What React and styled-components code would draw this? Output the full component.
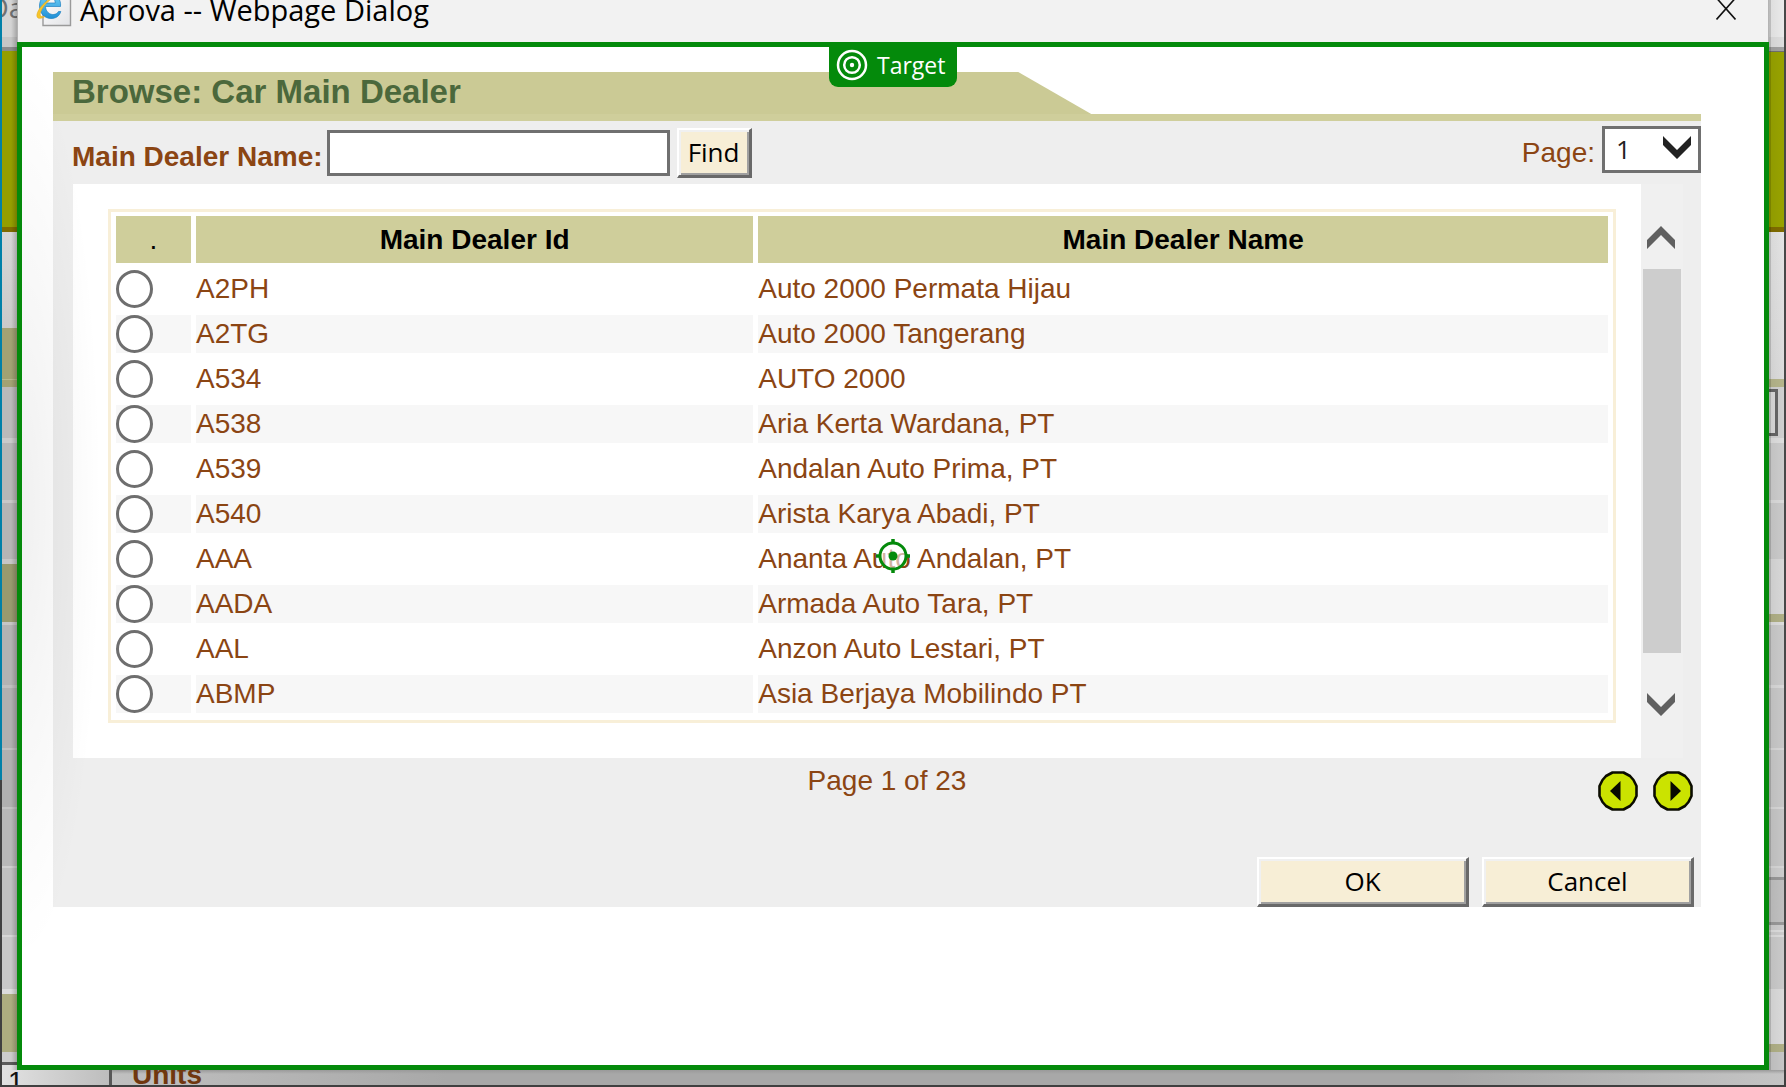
import React, { useState } from "react";
import styled, { createGlobalStyle } from "styled-components";

const arial = `"Liberation Sans", Arial, sans-serif`;
const segoe = `"Open Sans", "Noto Sans", sans-serif`;
const green = "#048a0b";
const brown = "#8b4513";

const GlobalStyle = createGlobalStyle`
  *, *::before, *::after { box-sizing: border-box; }
  body { margin: 0; background: #b4b4b4; font-family: ${arial}; }
`;

const Page = styled.div`
  display: flex;
  flex-direction: column;
  min-height: 100vh;
  overflow: hidden;
`;

const Middle = styled.div`
  display: flex;
  flex: 1;
`;

const Strip = styled.div`
  display: flex;
  flex-direction: column;
  width: 17px;
  flex: none;
  overflow: hidden;
  position: relative;
`;

const LeftStrip = styled(Strip)`
  border: solid;
  border-width: 0 0 0 2px;
  border-image: linear-gradient(#0080a8 0 780px, #404040 780px) 1;
  &::after {
    content: "";
    position: absolute;
    inset: 0;
    background: linear-gradient(to right, transparent 9px, rgba(0, 0, 0, 0.1) 12px, rgba(0, 0, 0, 0.22));
  }
`;

const RightStrip = styled(Strip)`
  border-right: 2px solid #484848;
  &::after {
    content: "";
    position: absolute;
    inset: 0;
    background: linear-gradient(to right, rgba(0, 0, 0, 0.2) 2px, rgba(0, 0, 0, 0.05) 2px, transparent);
  }
`;

const Band = styled.div`
  flex: ${(p) => (p.$h ? `0 0 ${p.$h}px` : "1")};
  background: ${(p) => p.$c};
`;

const TabBand = styled(Band)`
  overflow: hidden;
  color: #707070;
  font: 28px/14px ${segoe};
  text-indent: -15px;
  white-space: nowrap;
`;

const FieldBand = styled(Band)`
  padding: 2px 6px 2px 0;
`;

const FieldEnd = styled.div`
  height: 47px;
  border: 3px solid #666;
  border-left: 0;
  background: #dadada;
`;

const BottomStrip = styled.div`
  display: flex;
  height: 17px;
  overflow: hidden;
  border: solid #404040;
  border-width: 0 2px 2px;
`;

const NumberCell = styled.div`
  width: 110px;
  border-right: 3px solid #585858;
  background: linear-gradient(to right, #e2e2e2, #bdbdbd);
  padding-left: 6px;
  color: #111;
  font: 28px/24px ${arial};
`;

const UnitsCell = styled.div`
  flex: 1;
  padding-left: 20px;
  background: linear-gradient(#9a9a9a, transparent 4px), linear-gradient(to right, #c0c0c0, #a8a8a8 20%, #a8a8a8 80%, #c4c4c4);
  color: #70370f;
  font: bold 28px/10px ${arial};
`;

const Dialog = styled.main`
  flex: 1;
  min-width: 0;
  display: flex;
  flex-direction: column;
`;

const TitleBar = styled.header`
  display: flex;
  height: 42px;
  margin: 0 1px;
  padding: 0 32px 0 18px;
  background: #f2f2f2;
  overflow: hidden;
`;

const Title = styled.div`
  flex: 1;
  margin-left: 8px;
  color: #000;
  font: 29px/19px ${segoe};
  white-space: nowrap;
`;

const CloseButton = styled.button`
  height: 20px;
  padding: 0;
  border: 0;
  background: none;
`;

const Frame = styled.section`
  position: relative;
  flex: 1;
  padding: 25px 63px 25px 31px;
  border: 5px solid ${green};
  background: #fff;
  &::after {
    content: "";
    position: absolute;
    left: 0;
    top: 0;
    width: 80px;
    height: 920px;
    background: radial-gradient(ellipse at left, rgba(0, 0, 0, 0.06), transparent 70%);
    pointer-events: none;
  }
`;

const TargetTag = styled.div`
  position: absolute;
  top: 0;
  left: 50%;
  transform: translateX(-50%);
  display: flex;
  align-items: center;
  gap: 9px;
  width: 128px;
  height: 40px;
  padding: 0 7px 4px;
  border-radius: 0 0 9px 9px;
  background: ${green};
  color: #fff;
  font: 23px/36px ${segoe};
`;

const Crosshair = styled.svg`
  position: absolute;
  top: 50%;
  left: 50%;
  transform: translate(-50%, -50%);
  pointer-events: none;
`;

const Banner = styled.div`
  border-bottom: 7px solid #cfce9b;
`;

const Heading = styled.h1`
  width: 63%;
  height: 42px;
  margin: 0;
  padding-left: 19px;
  background: #cbca95;
  clip-path: polygon(0 0, calc(100% - 73px) 0, 100% 100%, 0 100%);
  color: #4b683c;
  font: bold 33px/39px ${arial};
`;

const Panel = styled.form`
  background: #eee;
`;

const SearchRow = styled.div`
  display: flex;
  justify-content: space-between;
  align-items: flex-start;
  height: 63px;
  padding-left: 19px;
  padding-top: 5px;
`;

const Group = styled.div`
  display: flex;
  align-items: center;
  gap: ${(p) => p.$gap}px;
  padding-top: ${(p) => p.$top || 0}px;
`;

const Label = styled.label`
  padding-top: 7px;
  color: ${brown};
  font: ${(p) => (p.$bold ? "bold" : "normal")} 28px/32px ${arial};
`;

const TextBox = styled.input`
  width: 343px;
  height: 46px;
  margin-right: 3px;
  padding: 0 6px;
  border: 3px solid #707070;
  background: #fff;
  font: 28px ${arial};
`;

const Button = styled.button`
  width: ${(p) => (p.$wide ? 212 : 75)}px;
  height: 50px;
  padding: 0 0 2px;
  border: solid;
  border-width: 2px 3px 3px 2px;
  border-color: #fff #696969 #696969 #fff;
  box-shadow: inset 2px 2px #f0f0f0, inset -2px -2px #a0a0a0;
  background: #f7eed6;
  color: #000;
  font: 26px/36px ${segoe};
`;

const SelectBox = styled.div`
  position: relative;
  svg {
    position: absolute;
    right: 10px;
    top: 10px;
    pointer-events: none;
  }
`;

const Select = styled.select`
  display: block;
  appearance: none;
  width: 99px;
  height: 47px;
  padding: 0 11px 2px;
  border: 3px solid #707070;
  border-radius: 0;
  background: #fff;
  color: #222;
  font: 26px ${segoe};
`;

const Results = styled.div`
  display: flex;
  margin-left: 20px;
  padding-right: 18px;
`;

const Sheet = styled.div`
  flex: 1;
  padding: 25px 25px 35px 35px;
  background: #fff;
`;

const TableFrame = styled.div`
  padding: 4px 0 7px;
  border: 3px solid #f8efd8;
`;

const Table = styled.table`
  width: 100%;
  table-layout: fixed;
  border-collapse: separate;
  border-spacing: 5px 0;
`;

const HeadCell = styled.th`
  width: ${(p) => p.$width || "auto"};
  height: 47px;
  padding: 0;
  background: #cfce9b;
  color: #000;
  font: ${(p) => (p.$plain ? "normal" : "bold")} 28px/38px ${arial};
`;

const Cell = styled.td`
  height: 45px;
  padding: 0;
  border-top: 7px solid #fff;
  background: ${(p) => (p.$striped ? "#f7f7f7" : "#fff")};
  color: ${brown};
  font: 28px/38px ${arial};
  white-space: nowrap;
`;

const Radio = styled.input`
  appearance: none;
  display: block;
  width: 37px;
  height: 38px;
  margin: 0;
  border: 3px solid #6e6e6e;
  border-radius: 50%;
  background: #fff;
  &:checked { box-shadow: inset 0 0 0 7px #fff; background: #333; }
`;

const ScrollBar = styled.div`
  display: flex;
  flex-direction: column;
  align-items: center;
  width: 42px;
  padding: 22px 2px;
  background: #f0f0f0;
`;

const ScrollButton = styled.button`
  width: 38px;
  height: 63px;
  padding: 0 2px 0 0;
  border: 0;
  background: none;
  svg { display: block; margin: 0 auto; }
`;

const Thumb = styled.div`
  width: 38px;
  height: 384px;
  margin-bottom: auto;
  background: #cdcdcd;
`;

const Pager = styled.div`
  display: grid;
  grid-template-columns: 1fr auto 1fr;
  align-items: start;
  height: 99px;
  padding: 4px 8px 0 28px;
`;

const PageCount = styled.div`
  grid-column: 2;
  color: ${brown};
  font: 28px/38px ${arial};
`;

const PagerButtons = styled.div`
  display: flex;
  justify-content: flex-end;
  gap: 15px;
  padding-top: 9px;
`;

const RoundButton = styled.button`
  width: 40px;
  height: 40px;
  padding: 0;
  border: 0;
  background: none;
  svg { display: block; }
`;

const Actions = styled.div`
  display: flex;
  justify-content: flex-end;
  gap: 13px;
  padding-right: 7px;
`;

const leftBands = [
  [37, "#d4d4d4", "tab"], [10, "#c6c6c6"], [4, "#8c8c8c"], [176, "#949e00"], [5, "#806c00"],
  [96, "linear-gradient(#d6d6d6, #cacaca)"], [51, "#a2a273"], [1, "#b8b88e"], [7, "#a2a273"],
  [51, "#bababa"], [5, "#cacaca"], [57, "#b7b7b7"], [3, "#c8c8c8"], [56, "#b5b5b5"], [5, "#c6c6c6"],
  [58, "#989a6e"], [3, "#c6c6c6"], [60, "#b3b3b3"], [3, "#c0c0c0"], [60, "#b0b0b0"], [2, "#c0c0c0"],
  [57, "#b0b0b0"], [2, "#c4c4c4"], [57, "#b8b8b8"], [2, "#cfcfcf"], [67, "#c0c0c0"], [2, "#d6d6d6"],
  [52, "#c8c8c8"], [5, "#dcdcdc"], [58, "#adad80"], [10, "#cccccc"], [3, "#5a5a5a"], [0, "#dedede"],
];

const rightBands = [
  [37, "#eaeaea"], [10, "#dedede"], [4, "#a2a2a2"], [1, "#707070"], [175, "#98a300"], [5, "#806c00"],
  [147, "linear-gradient(#e4e4e4, #dcdcdc)"], [8, "#b5b58b"], [51, "#d0d0d0", "field"], [5, "#dedede"],
  [57, "#cccccc"], [3, "#dadada"], [56, "#cacaca"], [55, "#d8d8d8"], [8, "#b0b086"], [3, "#dcdcdc"],
  [60, "#cacaca"], [3, "#d8d8d8"], [60, "#c8c8c8"], [2, "#d6d6d6"], [57, "#c8c8c8"], [2, "#d6d6d6"],
  [57, "#c6c6c6"], [2, "#d6d6d6"], [9, "#cccccc"], [3, "#989898"], [42, "#c0c0c0"], [3, "#989898"],
  [5, "#cccccc"], [2, "#dcdcdc"], [3, "#cccccc"], [2, "#dcdcdc"], [52, "#cacaca"], [55, "#dadada"],
  [8, "#b0b086"], [0, "#c6c6c6"],
];

const dealers = [
  ["A2PH", "Auto 2000 Permata Hijau"],
  ["A2TG", "Auto 2000 Tangerang"],
  ["A534", "AUTO 2000"],
  ["A538", "Aria Kerta Wardana, PT"],
  ["A539", "Andalan Auto Prima, PT"],
  ["A540", "Arista Karya Abadi, PT"],
  ["AAA", "Ananta Auto Andalan, PT"],
  ["AADA", "Armada Auto Tara, PT"],
  ["AAL", "Anzon Auto Lestari, PT"],
  ["ABMP", "Asia Berjaya Mobilindo PT"],
];

const renderBand = ([height, color, kind], index) => {
  if (kind === "tab") return <TabBand key={index} $h={height} $c={color}>Oa</TabBand>;
  if (kind === "field") return <FieldBand key={index} $h={height} $c={color}><FieldEnd /></FieldBand>;
  return <Band key={index} $h={height} $c={color} />;
};

const BrowserIcon = () => (
  <svg width="36" height="27" viewBox="0 0 36 27" fill="none" aria-hidden="true">
    <defs>
      <linearGradient id="sheet" x1="0" y1="0" x2="1" y2="1">
        <stop offset="0" stopColor="#fff" />
        <stop offset="1" stopColor="#e2e3e6" />
      </linearGradient>
      <linearGradient id="letter" x1="0" y1="0" x2="0" y2="1">
        <stop offset="0" stopColor="#6fd0f6" />
        <stop offset="1" stopColor="#1f8fd6" />
      </linearGradient>
    </defs>
    <path d="M7 -8H34.5V25.5H7Z" fill="url(#sheet)" stroke="#9a9a9a" strokeWidth="1.4" />
    <path d="M22.500 11.500C20.500 15 15.500 15.700 12 12.500C10 10.500 9.500 8 9.500 6.500H24.500C25.500 -1 20 -6 14 -5.500C7 -5 3.500 0 3.500 6C3.500 13 8.500 18.500 15 18.500C20 18.500 23.500 16 24.800 11.500ZM9.800 3C10.500 -1.500 13 -2.500 15 -2.500C17.500 -2.500 19.300 0 19.300 3Z" fill="url(#letter)" stroke="#1c80c2" strokeWidth="0.7" />
    <path d="M24 -6C15 -4 3 6 1 14C0 19 4 19.500 9 16.500C5 17.500 3.500 16 4.500 12.500C7 5 16 -3 24 -6Z" fill="#f7c52b" stroke="#dda51c" strokeWidth="0.5" />
  </svg>
);

const Chevron = ({ up, dark }) => (
  <svg width="28" height="23" viewBox="0 0 28 23" aria-hidden="true">
    <path
      d={up ? "M14 0L28 14V23L14 9L0 23V14Z" : "M14 23L28 9V0L14 14L0 0V9Z"}
      fill={dark ? "#222" : "#606060"}
    />
  </svg>
);

const RoundArrow = ({ next }) => (
  <svg width="40" height="40" viewBox="0 0 40 40" aria-hidden="true">
    <path
      d="M14.500 1.500H25.500L32 5L35.500 9L38.500 15V25L35.500 31L32 35L25.500 38.500H14.500L8 35L4.500 31L1.500 25V15L4.500 9L8 5Z"
      fill="#cbe300"
      stroke="#0b0c00"
      strokeWidth="2.600"
      strokeLinejoin="round"
    />
    <path d={next ? "M17.500 10L28 20L17.500 30Z" : "M22.500 10L12 20L22.500 30Z"} fill="#080900" />
  </svg>
);

export default function App() {
  const [name, setName] = useState("");
  return (
    <>
      <GlobalStyle />
      <Page>
        <Middle>
          <LeftStrip>{leftBands.map(renderBand)}</LeftStrip>
          <Dialog>
            <TitleBar>
              <BrowserIcon />
              <Title>Aprova -- Webpage Dialog</Title>
              <CloseButton type="button" aria-label="Close">
                <svg width="20" height="20" viewBox="0 0 20 20" fill="none" stroke="#111" strokeWidth="1.600">
                  <path d="M0.500 -2L19.500 19.500M19.500 -2L0.500 19.500" />
                </svg>
              </CloseButton>
            </TitleBar>
            <Frame>
              <Banner>
                <Heading>Browse: Car Main Dealer</Heading>
              </Banner>
              <Panel onSubmit={(e) => e.preventDefault()}>
                <SearchRow>
                  <Group $top={2} $gap={4}>
                    <Label $bold htmlFor="dealer-name">Main Dealer Name:</Label>
                    <TextBox id="dealer-name" value={name} onChange={(e) => setName(e.target.value)} />
                    <Button type="submit">Find</Button>
                  </Group>
                  <Group $gap={7}>
                    <Label htmlFor="page">Page:</Label>
                    <SelectBox>
                      <Select id="page" defaultValue="1">
                        {Array.from({ length: 23 }, (_, i) => (
                          <option key={i}>{i + 1}</option>
                        ))}
                      </Select>
                      <Chevron dark />
                    </SelectBox>
                  </Group>
                </SearchRow>
                <Results>
                  <Sheet>
                    <TableFrame>
                      <Table>
                        <thead>
                          <tr>
                            <HeadCell $plain $width="75px">.</HeadCell>
                            <HeadCell $width="37.6%">Main Dealer Id</HeadCell>
                            <HeadCell>Main Dealer Name</HeadCell>
                          </tr>
                        </thead>
                        <tbody>
                          {dealers.map(([id, dealer], i) => (
                            <tr key={id}>
                              <Cell $striped={i % 2 === 1}>
                                <Radio type="radio" name="dealer" value={id} aria-label={dealer} />
                              </Cell>
                              <Cell $striped={i % 2 === 1}>{id}</Cell>
                              <Cell $striped={i % 2 === 1}>{dealer}</Cell>
                            </tr>
                          ))}
                        </tbody>
                      </Table>
                    </TableFrame>
                  </Sheet>
                  <ScrollBar>
                    <ScrollButton type="button" aria-label="Scroll up"><Chevron up /></ScrollButton>
                    <Thumb />
                    <ScrollButton type="button" aria-label="Scroll down"><Chevron /></ScrollButton>
                  </ScrollBar>
                </Results>
                <Pager>
                  <PageCount>Page 1 of 23</PageCount>
                  <PagerButtons>
                    <RoundButton type="button" aria-label="Previous page"><RoundArrow /></RoundButton>
                    <RoundButton type="button" aria-label="Next page"><RoundArrow next /></RoundButton>
                  </PagerButtons>
                </Pager>
                <Actions>
                  <Button type="button" $wide>OK</Button>
                  <Button type="button" $wide>Cancel</Button>
                </Actions>
              </Panel>
              <TargetTag>
                <svg width="32" height="32" viewBox="0 0 32 32" fill="none" stroke="#fff" strokeWidth="2.500" aria-hidden="true">
                  <circle cx="16" cy="16" r="14" />
                  <circle cx="16" cy="16" r="7.800" />
                  <circle cx="16" cy="16" r="2.200" fill="#fff" stroke="none" />
                </svg>
                Target
              </TargetTag>
              <Crosshair width="34" height="34" viewBox="0 0 34 34" fill="none" stroke={green} strokeWidth="3" aria-hidden="true">
                <circle cx="17" cy="17" r="13" fill="rgba(255,255,255,0.6)" />
                <path d="M17 0V5M17 29V34M0 17H5M29 17H34" strokeWidth="3.500" />
                <circle cx="17" cy="17" r="4.500" fill={green} stroke="none" />
              </Crosshair>
            </Frame>
          </Dialog>
          <RightStrip>{rightBands.map(renderBand)}</RightStrip>
        </Middle>
        <BottomStrip>
          <NumberCell>1</NumberCell>
          <UnitsCell>Units</UnitsCell>
        </BottomStrip>
      </Page>
    </>
  );
}
